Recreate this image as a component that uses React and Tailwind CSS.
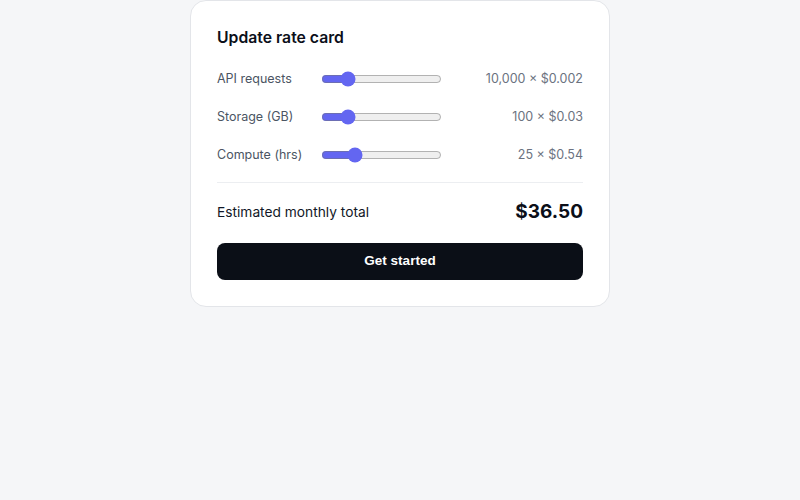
import { useState } from "react";

const items = [
  { key: "api", label: "API requests", min: 1000, max: 50000, step: 1000, init: 10000, price: 0.002, priceLabel: "$0.002" },
  { key: "storage", label: "Storage (GB)", min: 10, max: 500, step: 10, init: 100, price: 0.03, priceLabel: "$0.03" },
  { key: "compute", label: "Compute (hrs)", min: 0, max: 100, step: 1, init: 25, price: 0.54, priceLabel: "$0.54" },
];

export default function App() {
  const [values, setValues] = useState(
    Object.fromEntries(items.map((i) => [i.key, i.init]))
  );

  const total = items.reduce((sum, i) => sum + values[i.key] * i.price, 0);

  return (
    <div className="min-h-screen bg-[#f5f6f8] font-['Inter',sans-serif]">
      <div className="mx-auto w-[420px] rounded-2xl border border-[#e3e5e9] bg-white p-[26px]">
        <h2 className="text-[15.75px] leading-[22px] font-semibold text-[#0b0f19]">Update rate card</h2>

        {/* sliders */}
        <div className="mt-[18px] flex flex-col gap-[14px]">
          {items.map((i) => (
            <div key={i.key} className="flex h-6 items-center">
              <span className="w-[105px] text-[12.5px] text-[#4b5563]">{i.label}</span>
              <input
                type="range"
                min={i.min}
                max={i.max}
                step={i.step}
                value={values[i.key]}
                onChange={(e) => setValues({ ...values, [i.key]: Number(e.target.value) })}
                className="m-0 -ml-px w-[121px] accent-[#6366f1]"
              />
              <span className="ml-auto text-[12.5px] text-[#6b7280]">
                {values[i.key].toLocaleString("en-US")} × {i.priceLabel}
              </span>
            </div>
          ))}
        </div>

        <div className="mt-[15px] border-t border-[#eceef1]" />

        {/* total */}
        <div className="mt-[17px] flex h-6 items-center justify-between">
          <span className="text-[13.75px] text-[#111827]">Estimated monthly total</span>
          <span className="text-[19px] font-bold text-[#0b0f19]">${total.toFixed(2)}</span>
        </div>

        <button className="mt-[19px] h-[37px] w-full rounded-lg bg-[#0b0f17] font-['Liberation_Sans',sans-serif] text-[13.5px] font-bold text-white">
          Get started
        </button>
      </div>
    </div>
  );
}
